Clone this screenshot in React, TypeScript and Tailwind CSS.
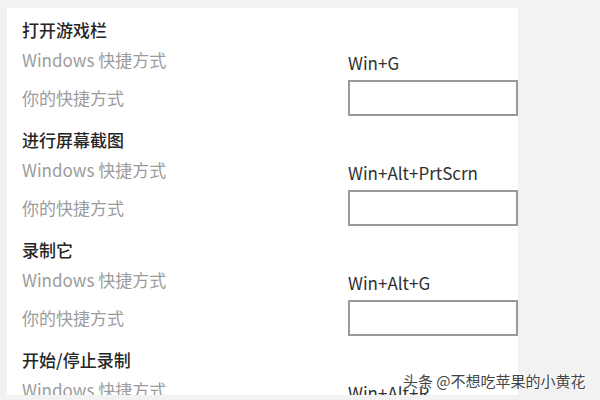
import React from "react";

const sections = [
  { title: "打开游戏栏", key: "Win+G" },
  { title: "进行屏幕截图", key: "Win+Alt+PrtScrn" },
  { title: "录制它", key: "Win+Alt+G" },
  { title: "开始/停止录制", key: "Win+Alt+R" },
];

const font = { fontFamily: '"Noto Sans CJK SC", "Noto Sans", sans-serif' };

export default function App() {
  return (
    <div className="relative w-[600px] h-[400px] bg-[#f2f2f2] overflow-hidden" style={font}>
      <div className="absolute left-[7px] top-[8px] w-[511px] h-[387px] bg-white overflow-hidden pl-[15px] pt-[11px]">
        {sections.map((s, i) => (
          <div key={i} className="flex flex-col">
            <div className="h-[22px] leading-[22px] text-[17px] text-[#262626] font-medium">{s.title}</div>
            <div className="flex h-[39px]">
              <div className="w-[326px] mt-[8px] h-[22px] leading-[22px] text-[17px] text-[#9c9c9c]">
                Windows 快捷方式
              </div>
              <div className="mt-[11px] h-[22px] leading-[22px] text-[17px] text-[#303030]">{s.key}</div>
            </div>
            <div className="flex h-[36px] items-center">
              <div className="w-[326px] h-[22px] leading-[22px] text-[17px] text-[#9c9c9c]">你的快捷方式</div>
              <div className="w-[170px] h-[36px] border-2 border-[#999] bg-white" />
            </div>
            <div className="h-[13px]" />
          </div>
        ))}
      </div>
      <div
        className="absolute left-[403px] top-[370px] h-[22px] leading-[22px] text-[15px] text-[#444] whitespace-nowrap"
        style={{ textShadow: "0 0 2px #fff, 0 0 2px #fff" }}
      >
        头条 @不想吃苹果的小黄花
      </div>
    </div>
  );
}
